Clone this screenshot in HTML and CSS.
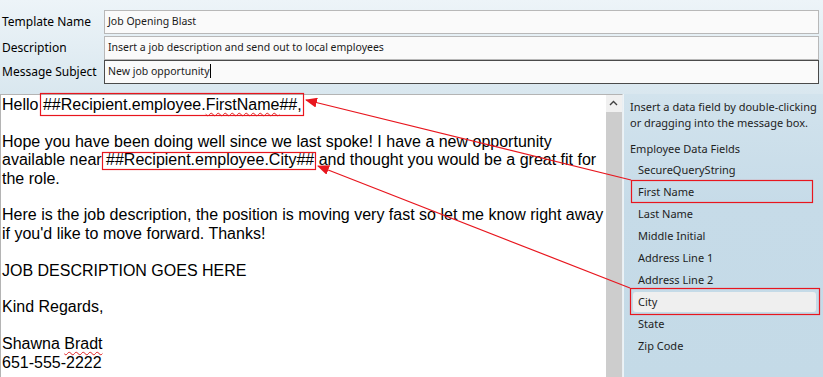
FILE: index.html
```html
<!DOCTYPE html>
<html lang="en">
<head>
    <meta charset="UTF-8">
    <title>Message Template Editor</title>
    <link rel="stylesheet" href="styles.css">
</head>
<body>
<div class="page">

    <!-- Template details -->
    <div class="meta">
        <div class="row first">
            <span class="label">Template Name</span>
            <div class="field">Job Opening Blast</div>
        </div>
        <div class="row">
            <span class="label">Description</span>
            <div class="field">Insert a job description and send out to local employees</div>
        </div>
        <div class="row">
            <span class="label">Message Subject</span>
            <div class="field focused">New job opportunity<span class="caret"></span></div>
        </div>
    </div>

    <div class="main">
        <!-- Message body -->
        <div class="editor">
            <div class="body">
                Hello ##Recipient.employee.<span class="misspelled">FirstName</span>##,<br>
                <br>
                Hope you have been doing well since we last spoke! I have a new opportunity<br>
                available near ##Recipient.employee.City## and thought you would be a great fit for<br>
                the role.<br>
                <br>
                Here is the job description, the position is moving very fast so let me know right away<br>
                if you'd like to move forward. Thanks!<br>
                <br>
                JOB DESCRIPTION GOES HERE<br>
                <br>
                Kind Regards,<br>
                <br>
                Shawna <span class="misspelled">Bradt</span><br>
                651-555-2222
            </div>
            <div class="scrollbar">
                <div class="scroll-up">
                    <svg width="16" height="16" viewBox="0 0 16 16"><polyline points="4,9 7.5,5.5 11,9" fill="none" stroke="#404040" stroke-width="1.4"/></svg>
                </div>
            </div>
        </div>

        <!-- Data fields -->
        <div class="fields">
            <p class="hint">Insert a data field by double-clicking<br>or dragging into the message box.</p>
            <div class="group">Employee Data Fields</div>
            <ul class="field-list">
                <li>SecureQueryString</li>
                <li>First Name</li>
                <li>Last Name</li>
                <li>Middle Initial</li>
                <li>Address Line 1</li>
                <li>Address Line 2</li>
                <li class="hover">City</li>
                <li>State</li>
                <li>Zip Code</li>
            </ul>
        </div>
    </div>

    <!-- Annotation layer -->
    <svg class="annot" width="823" height="377" viewBox="0 0 823 377">
        <defs>
            <marker id="head" markerWidth="12" markerHeight="10" refX="11" refY="5" orient="auto" markerUnits="userSpaceOnUse">
                <path d="M0,0 L12,5 L0,10 Z" fill="#e8161e"/>
            </marker>
        </defs>
        <g fill="none" stroke="#e8161e" stroke-width="1.2">
            <rect x="40.5" y="93.5" width="263" height="22"/>
            <rect x="102.5" y="152.5" width="213" height="17"/>
            <rect x="631.5" y="180.5" width="181" height="22"/>
            <rect x="630.5" y="288.5" width="189" height="26"/>
            <line x1="631" y1="180" x2="306" y2="100" marker-end="url(#head)"/>
            <line x1="630" y1="288" x2="318" y2="166" marker-end="url(#head)"/>
        </g>
    </svg>
</div>
</body>
</html>
```

FILE: styles.css
```css
body { margin: 0; font-family: "Noto Sans", sans-serif; color: #111; }
.page { position: relative; width: 823px; height: 377px; overflow: hidden; background: linear-gradient(#edf4f8, #d9e7ef 94px, #cfe1ec); }

.meta { padding-top: 10px; }
.row { display: grid; grid-template-columns: 104px 1fr; align-items: center; margin-right: 4px; }
.row.first { margin-bottom: 2px; }
.label { padding-left: 2px; font-size: 12px; color: #000; margin-top: -1px; }
.field { height: 24px; box-sizing: border-box; border: 1px solid #b8b8b8; background: #fafafa; padding-left: 3px; font-size: 10.5px; line-height: 21px; color: #1a1a1a; white-space: nowrap; }
.field.focused { border-color: #4a4a4a; }
.caret { display: inline-block; width: 1px; height: 14px; background: #000; vertical-align: -3px; }

.main { display: flex; margin-top: 10px; height: 283px; }
.editor { width: 623px; box-sizing: border-box; display: flex; background: #fff; border: 1px solid #b4b4b4; border-right-color: #e9eff3; border-bottom: none; }
.body { flex: 1; min-width: 0; padding: 1px 0 0 1px; font-family: "Liberation Sans", Arial, sans-serif; font-size: 16px; line-height: 18.4px; color: #000; white-space: nowrap; overflow: hidden; }
.misspelled { text-decoration: underline wavy #e02020; text-decoration-thickness: 1px; text-underline-offset: 2px; }
.scrollbar { width: 16px; background: #cdcdcd; }
.scroll-up { height: 17px; background: #f0f0f0; display: flex; align-items: center; justify-content: center; }

.fields { flex: 1; border-left: 1px solid #edf3f6; background: linear-gradient(#d2e3ed, #c6dbe8 110px, #c4dae7); padding: 5px 0 0 6px; font-size: 11px; color: #1e1e1e; }
.hint { margin: 0; line-height: 15.5px; }
.group { margin-top: 11.4px; line-height: 15.5px; }
.field-list { list-style: none; margin: 3px 7px 0 3px; padding: 0; }
.field-list li { height: 20px; line-height: 20px; margin-bottom: 2px; padding-left: 5px; border-radius: 3px; }
.field-list li.hover { background: #efefef; }

.annot { position: absolute; left: 0; top: 0; pointer-events: none; }
```
